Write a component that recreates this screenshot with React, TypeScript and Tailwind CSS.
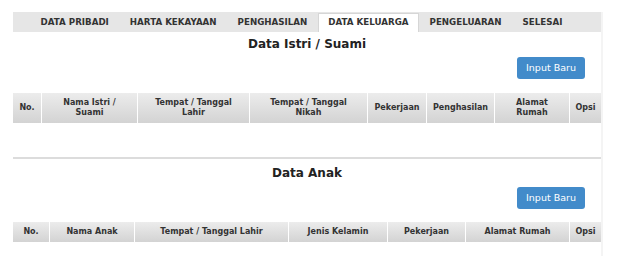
const tabs = ['DATA PRIBADI', 'HARTA KEKAYAAN', 'PENGHASILAN', 'DATA KELUARGA', 'PENGELUARAN', 'SELESAI'];

const istriCols = [
  ['No.'],
  ['Nama Istri /', 'Suami'],
  ['Tempat / Tanggal', 'Lahir'],
  ['Tempat / Tanggal', 'Nikah'],
  ['Pekerjaan'],
  ['Penghasilan'],
  ['Alamat', 'Rumah'],
  ['Opsi'],
];

const anakCols = ['No.', 'Nama Anak', 'Tempat / Tanggal Lahir', 'Jenis Kelamin', 'Pekerjaan', 'Alamat Rumah', 'Opsi'];

const InputButton = () => (
  <div className="flex justify-end pr-4">
    <button className="h-[22px] w-[68px] rounded-[3px] bg-[#428bca] text-[9.5px] text-white">Input Baru</button>
  </div>
);

export default function App() {
  return (
    <div className="min-h-[256px] bg-white pl-[13px] pt-3 font-['DejaVu_Sans',sans-serif] text-[#333]">
      <div className="min-h-[244px] w-[590px] border-r-2 border-[#f4f4f4]">
        <div className="w-[588px]">
          {/* Tabs */}
          <div className="flex h-5 items-end bg-[#e6e6e6] pl-[17px]">
            {tabs.map((t) => {
              const active = t === 'DATA KELUARGA';
              return (
                <div
                  key={t}
                  className={
                    active
                      ? 'flex h-[19px] items-center border border-b-0 border-[#d6d6d6] bg-white px-[9.5px] text-[8.7px] font-bold'
                      : 'flex h-[19px] items-center px-[10.5px] text-[8.7px] font-bold'
                  }
                >
                  {t}
                </div>
              );
            })}
          </div>

          {/* Data Istri / Suami */}
          <h2 className="mt-1 text-center text-[12px] leading-4 font-bold text-[#222]">Data Istri / Suami</h2>
          <div className="mt-[5px]">
            <InputButton />
          </div>
          <div className="mt-[14px] grid h-[30px] grid-cols-[28px_96px_112px_118px_59px_68px_75px_32px] bg-gradient-to-b from-[#ececec] to-[#d3d3d3]">
            {istriCols.map((c, i) => (
              <div
                key={i}
                className={
                  i === 0
                    ? 'flex flex-col items-center justify-center text-center text-[8px] leading-[10px] font-bold'
                    : 'flex flex-col items-center justify-center border-l border-white text-center text-[8px] leading-[10px] font-bold'
                }
              >
                {c.map((l) => (
                  <span key={l}>{l}</span>
                ))}
              </div>
            ))}
          </div>
          <div className="h-[34px]" />
          <div className="h-[2px] bg-[#dcdcdc]" />

          {/* Data Anak */}
          <h2 className="mt-[6px] text-center text-[12px] leading-4 font-bold text-[#222]">Data Anak</h2>
          <div className="mt-[6px]">
            <InputButton />
          </div>
          <div className="mt-[13px] grid h-5 grid-cols-[36px_85px_154px_99px_78px_104px_32px] bg-gradient-to-b from-[#ececec] to-[#d3d3d3]">
            {anakCols.map((c, i) => (
              <div
                key={c}
                className={
                  i === 0
                    ? 'flex items-center justify-center text-[8px] font-bold'
                    : 'flex items-center justify-center border-l border-white text-[8px] font-bold'
                }
              >
                {c}
              </div>
            ))}
          </div>
        </div>
      </div>
    </div>
  );
}
